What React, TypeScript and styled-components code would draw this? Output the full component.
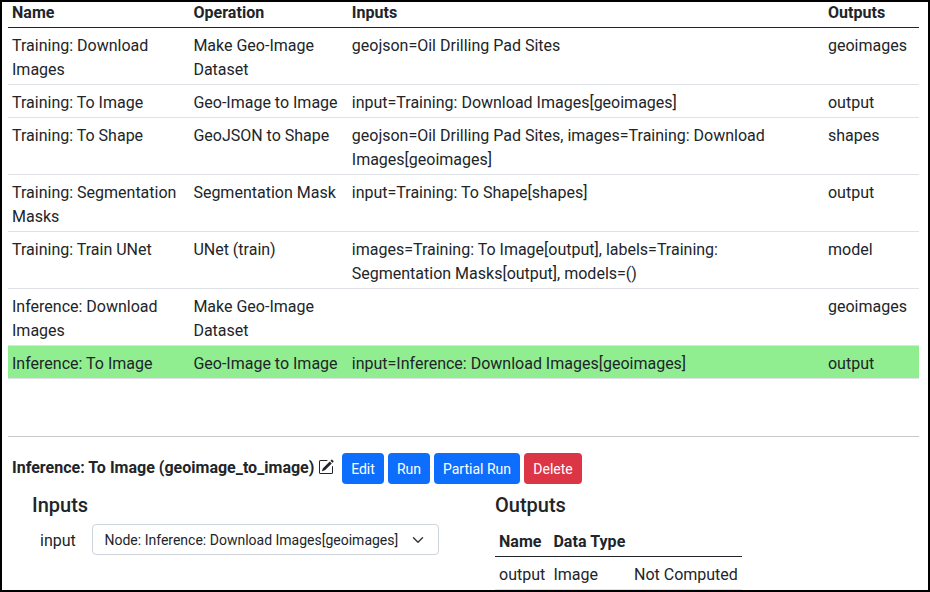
import React from "react";
import styled, { createGlobalStyle } from "styled-components";
import { BsPencilSquare } from "react-icons/bs";

const GlobalStyle = createGlobalStyle`
  *, *::before, *::after { box-sizing: border-box; }
  body {
    margin: 0;
    background: #fff;
    color: #212529;
    font: 400 16px/24px Roboto, "Liberation Sans", sans-serif;
  }
`;

const Frame = styled.div`
  height: 592px;
  border: 2px solid #000;
  padding: 0 9px 0 6px;
  overflow: hidden;
`;

const Scroller = styled.div`
  height: 434px;
  overflow: hidden;
`;

const Table = styled.table<{ $offset?: number }>`
  width: 100%;
  margin-top: ${(p) => p.$offset ?? 0}px;
  table-layout: fixed;
  border-collapse: collapse;
`;

const Col = styled.col<{ $width: number }>`
  width: ${(p) => p.$width}px;
`;

const HeadCell = styled.th`
  padding: 6px 4px 2px;
  border-bottom: 1px solid #212529;
  text-align: left;
  font-weight: 700;
  letter-spacing: 0.05px;
  white-space: nowrap;
`;

const Row = styled.tr<{ $selected?: boolean }>`
  background: ${(p) => (p.$selected ? "#90ee90" : "transparent")};
`;

const Cell = styled.td`
  padding: 6px 4px 2px;
  border-bottom: 1px solid #dee2e6;
  vertical-align: top;
`;

const Divider = styled.hr`
  height: 1px;
  margin: 0;
  border: 0;
  background: #c8c8c9;
`;

const TitleBar = styled.div`
  display: flex;
  align-items: center;
  gap: 4px;
  height: 31px;
  margin: 16px 0 0 4px;
`;

const Title = styled.div`
  display: flex;
  align-items: center;
  justify-content: space-between;
  width: 322px;
  margin-right: 4px;
  padding-bottom: 1px;
  font-weight: 700;
  letter-spacing: 0.01px;
  white-space: nowrap;

  svg {
    margin-bottom: 2px;
  }
`;

const Button = styled.button<{ $width: number; $danger?: boolean }>`
  width: ${(p) => p.$width}px;
  height: 31px;
  border: 0;
  border-radius: 4px;
  background: ${(p) => (p.$danger ? "#dc3545" : "#0d6efd")};
  color: #fff;
  font: 400 14px/21px Roboto, sans-serif;
  padding: 6px 0 4px;
  white-space: nowrap;
`;

const Columns = styled.div`
  display: grid;
  grid-template-columns: 463px 247px;
  margin: 9px 0 0 24px;
`;

const Heading = styled.h5`
  margin: 0 0 7px;
  font-size: 20px;
  line-height: 24px;
  font-weight: 500;
`;

const Field = styled.label`
  display: flex;
  padding-left: 8px;
`;

const FieldName = styled.span`
  width: 52px;
  padding-top: 5px;
`;

const Select = styled.div`
  display: flex;
  align-items: center;
  justify-content: space-between;
  width: 347px;
  height: 31px;
  padding: 0 12px 0 11.5px;
  border: 1px solid #ced4da;
  border-radius: 4px;
  font-size: 14px;
  line-height: 21px;
  white-space: nowrap;
`;

const SelectText = styled.span`
  padding-top: 2px;
`;

const steps = [
  ["Training: Download Images", "Make Geo-Image Dataset", "geojson=Oil Drilling Pad Sites", "geoimages"],
  ["Training: To Image", "Geo-Image to Image", "input=Training: Download Images[geoimages]", "output"],
  ["Training: To Shape", "GeoJSON to Shape", "geojson=Oil Drilling Pad Sites, images=Training: Download Images[geoimages]", "shapes"],
  ["Training: Segmentation Masks", "Segmentation Mask", "input=Training: To Shape[shapes]", "output"],
  ["Training: Train UNet", "UNet (train)", "images=Training: To Image[output], labels=Training: Segmentation Masks[output], models=()", "model"],
  ["Inference: Download Images", "Make Geo-Image Dataset", "", "geoimages"],
  ["Inference: To Image", "Geo-Image to Image", "input=Inference: Download Images[geoimages]", "output"],
];
const selectedStep = "Inference: To Image";

function Chevron() {
  return (
    <svg width="16" height="12" viewBox="0 0 16 16" fill="none" stroke="#343a40" strokeLinecap="round" strokeLinejoin="round" strokeWidth="2">
      <path d="m2 5 6 6 6-6" />
    </svg>
  );
}

export default function App() {
  return (
    <>
      <GlobalStyle />
      <Frame>
        <Scroller>
          <Table $offset={-7}>
            <colgroup>
              <Col $width={181.4} />
              <Col $width={158.4} />
              <Col $width={476.2} />
              <Col $width={95} />
            </colgroup>
            <thead>
              <tr>
                {["Name", "Operation", "Inputs", "Outputs"].map((h) => (
                  <HeadCell key={h}>{h}</HeadCell>
                ))}
              </tr>
            </thead>
            <tbody>
              {steps.map((step) => (
                <Row key={step[0]} $selected={step[0] === selectedStep}>
                  {step.map((text, i) => (
                    <Cell key={i}>{text}</Cell>
                  ))}
                </Row>
              ))}
            </tbody>
          </Table>
        </Scroller>
        <Divider />
        <TitleBar>
          <Title>
            Inference: To Image (geoimage_to_image)
            <BsPencilSquare size={16} />
          </Title>
          <Button $width={42}>Edit</Button>
          <Button $width={42}>Run</Button>
          <Button $width={86}>Partial Run</Button>
          <Button $width={58} $danger>Delete</Button>
        </TitleBar>
        <Columns>
          <section>
            <Heading>Inputs</Heading>
            <Field>
              <FieldName>input</FieldName>
              <Select>
                <SelectText>Node: Inference: Download Images[geoimages]</SelectText>
                <Chevron />
              </Select>
            </Field>
          </section>
          <section>
            <Heading>Outputs</Heading>
            <Table>
              <colgroup>
                <Col $width={54.4} />
                <Col $width={80.6} />
                <Col $width={112} />
              </colgroup>
              <thead>
                <tr>
                  <HeadCell>Name</HeadCell>
                  <HeadCell>Data Type</HeadCell>
                  <HeadCell />
                </tr>
              </thead>
              <tbody>
                <Row>
                  <Cell>output</Cell>
                  <Cell>Image</Cell>
                  <Cell>Not Computed</Cell>
                </Row>
              </tbody>
            </Table>
          </section>
        </Columns>
      </Frame>
    </>
  );
}
